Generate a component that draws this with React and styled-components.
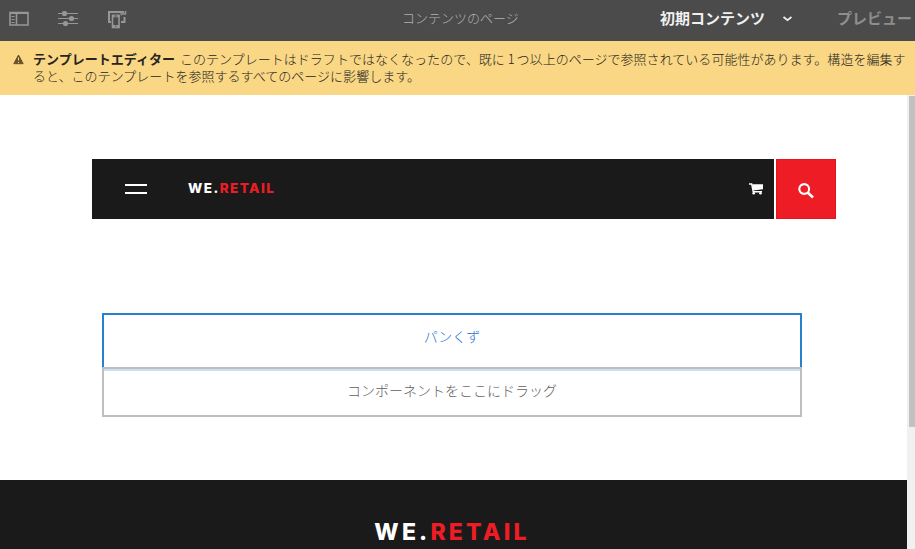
import React from 'react';
import styled, { createGlobalStyle } from 'styled-components';

const GlobalStyle = createGlobalStyle`
  * { box-sizing: border-box; }
  body {
    margin: 0;
    overflow: hidden;
    background: #fff;
    font-family: "Noto Sans CJK JP", sans-serif;
  }
`;

const Editor = styled.div`
  display: flex;
  flex-direction: column;
  width: 915px;
  height: 549px;
  overflow: hidden;
`;

const Toolbar = styled.header`
  display: grid;
  grid-template-columns: 402px 258px 177px 78px;
  align-items: center;
  height: 41px;
  flex: none;
  padding-bottom: 5px;
  background: #4b4b4b;
  color: #969696;
  white-space: nowrap;
`;

const ToolIcons = styled.div`
  display: flex;
  align-items: flex-start;
  gap: 29px;
  padding: 3px 0 0 9px;
  svg { display: block; }
`;

const PageTitle = styled.div`
  font-size: 13px;
  line-height: 20px;
  font-weight: 300;
  color: #b2b2b2;
`;

const ModeButton = styled.div`
  display: flex;
  align-items: center;
  gap: 17px;
  font-size: 15px;
  line-height: 20px;
  font-weight: 700;
  color: ${(p) => (p.$active ? '#f0f0f0' : '#8e8e8e')};
  svg { display: block; margin-top: 2px; }
`;

const Alert = styled.div`
  display: flex;
  flex: none;
  height: 54px;
  padding: 9px 0 0 13px;
  background: #fad784;
  color: #262522;
  svg { flex: none; margin: 4px 9px 0 0; }
`;

const AlertText = styled.div`
  font-size: 13px;
  line-height: 17px;
  font-weight: 300;
  letter-spacing: 0.03px;
  white-space: nowrap;
`;

const AlertLine = styled.div`
  height: 17px;
`;

const AlertTitle = styled.b`
  margin-right: 2px;
  font-weight: 700;
`;

const Digit = styled.span`
  margin: 0 -1px 0 0;
`;

const Viewport = styled.div`
  display: flex;
  flex: 1;
  min-height: 0;
`;

const Page = styled.main`
  width: 907px;
  padding-top: 64px;
  overflow: hidden;
`;

const ScrollTrack = styled.div`
  width: 8px;
  padding: 1px 0 0 2px;
  background: #f1f1f1;
`;

const ScrollThumb = styled.div`
  height: 331px;
  background: #c1c1c1;
`;

const SiteHeader = styled.div`
  display: flex;
  gap: 2px;
  width: 744px;
  height: 60px;
  margin-left: 92px;
`;

const NavBar = styled.div`
  display: flex;
  align-items: center;
  width: 682px;
  padding: 0 11px 0 33px;
  background: #1a1a1a;
  svg { display: block; margin: 0 0 1px auto; }
`;

const Burger = styled.div`
  width: 22px;
  height: 10px;
  margin-right: 41px;
  border: solid #fff;
  border-width: 2px 0;
`;

const SearchButton = styled.div`
  display: flex;
  align-items: center;
  justify-content: center;
  width: 60px;
  padding-top: 3px;
  border: 1px solid #e4151c;
  background: #ee1c25;
`;

const Logo = styled.div`
  padding-bottom: ${(p) => (p.$large ? '0' : '2px')};
  font-family: Inter, sans-serif;
  font-weight: 800;
  font-size: ${(p) => (p.$large ? '23px' : '13.5px')};
  line-height: ${(p) => (p.$large ? '30px' : '20px')};
  letter-spacing: ${(p) => (p.$large ? '3.2px' : '1.45px')};
  color: #fff;
  white-space: nowrap;
  span { color: #ee1c25; }
`;

const LayoutGrid = styled.section`
  width: 700px;
  margin: 94px 0 63px 102px;
  text-align: center;
  font-size: 14px;
  font-weight: 300;
  line-height: 20px;
`;

const Breadcrumb = styled.div`
  height: 54px;
  padding-top: 11px;
  border: 2px solid #2680cc;
  border-bottom: 0;
  color: #2873cf;
`;

const DropZone = styled.div`
  height: 50px;
  padding-top: 11px;
  border: 2px solid #bebebe;
  box-shadow: inset 0 2px #c9dff2;
  color: #606060;
`;

const Footer = styled.footer`
  display: flex;
  justify-content: center;
  height: 100px;
  padding: 37px 3px 0 0;
  background: #1a1a1a;
`;

const PanelIcon = () => (
  <svg width="20" height="16" viewBox="0 0 20 16" fill="none" stroke="#969696">
    <path d="M1 1.5h18v12.5H1zM7.5 1v13" strokeWidth="1.6" />
    <path d="M1 2h18" strokeWidth="2" />
    <path d="M2.5 5.5h3M2.5 8.5h3M2.5 11.5h3" />
  </svg>
);

const SlidersIcon = () => (
  <svg width="20" height="16" viewBox="0 0 20 16" fill="#969696">
    <path d="M0 2h20v1H0zM0 7h20v1H0zM0 12h20v1H0z" />
    <circle cx="6.5" cy="2.5" r="2.6" />
    <circle cx="13.5" cy="7.5" r="2.6" />
    <circle cx="7.5" cy="12.5" r="2.6" />
  </svg>
);

const DevicesIcon = () => (
  <svg width="20" height="18" viewBox="0 0 20 18" fill="none" stroke="#969696">
    <path d="M4 11H2V1h15M14 11h3.5V6" strokeWidth="2" />
    <path d="M14 4.5V3h4.5V0" strokeWidth="1.5" />
    <rect x="4" y="3" width="9.5" height="15" fill="#4b4b4b" stroke="none" />
    <rect x="5.5" y="4.5" width="6.5" height="12" strokeWidth="1.6" />
    <path d="M5 5h7.5M5 15.2h7.5" strokeWidth="2.4" />
    <path d="M7.5 5h2.5M8 15.2h1.5" stroke="#4b4b4b" />
  </svg>
);

const ChevronIcon = () => (
  <svg width="10" height="6" viewBox="0 0 10 6" fill="none" stroke="#f0f0f0" strokeWidth="1.8">
    <path d="M1.5 1l4 3.2L9.5 1" />
  </svg>
);

const WarningIcon = () => (
  <svg width="11" height="11" viewBox="0 0 11 11">
    <path d="M5.5 1L10.2 9.7H.8z" fill="#68532b" stroke="#68532b" strokeLinejoin="round" />
    <path d="M5.5 3.5v3M5.5 8v1" stroke="#fad784" strokeWidth="1" />
  </svg>
);

const CartIcon = () => (
  <svg width="14" height="12" viewBox="0 0 14 12" fill="none" stroke="#fff">
    <path d="M0 1h2.7l1.5 7.8H13" strokeWidth="1.4" />
    <path d="M3.1 1.3H14v5L4.3 7.5z" fill="#fff" stroke="none" />
    <circle cx="4.7" cy="10.3" r="1.3" fill="#fff" stroke="none" />
    <circle cx="11.5" cy="10.3" r="1.3" fill="#fff" stroke="none" />
  </svg>
);

const SearchIcon = () => (
  <svg width="16" height="16" viewBox="0 0 16 16" fill="none" stroke="#fff">
    <circle cx="6.2" cy="6" r="4.9" strokeWidth="2.1" />
    <path d="M9.7 9.5l5.3 5" strokeWidth="2.7" />
  </svg>
);

const Brand = ({ large }) => (
  <Logo $large={large}>WE.<span>RETAIL</span></Logo>
);

export default function App() {
  return (
    <Editor>
      <GlobalStyle />
      <Toolbar>
        <ToolIcons>
          <PanelIcon />
          <SlidersIcon />
          <DevicesIcon />
        </ToolIcons>
        <PageTitle>コンテンツのページ</PageTitle>
        <ModeButton $active>初期コンテンツ<ChevronIcon /></ModeButton>
        <ModeButton>プレビュー</ModeButton>
      </Toolbar>
      <Alert>
        <WarningIcon />
        <AlertText>
          <AlertLine>
            <AlertTitle>テンプレートエディター</AlertTitle> このテンプレートはドラフトではなくなったので、既に<Digit> 1 </Digit>つ以上のページで参照されている可能性があります。構造を編集す
          </AlertLine>
          <AlertLine>ると、このテンプレートを参照するすべてのページに影響します。</AlertLine>
        </AlertText>
      </Alert>
      <Viewport>
        <Page>
          <SiteHeader>
            <NavBar>
              <Burger />
              <Brand />
              <CartIcon />
            </NavBar>
            <SearchButton><SearchIcon /></SearchButton>
          </SiteHeader>
          <LayoutGrid>
            <Breadcrumb>パンくず</Breadcrumb>
            <DropZone>コンポーネントをここにドラッグ</DropZone>
          </LayoutGrid>
          <Footer><Brand large /></Footer>
        </Page>
        <ScrollTrack><ScrollThumb /></ScrollTrack>
      </Viewport>
    </Editor>
  );
}
